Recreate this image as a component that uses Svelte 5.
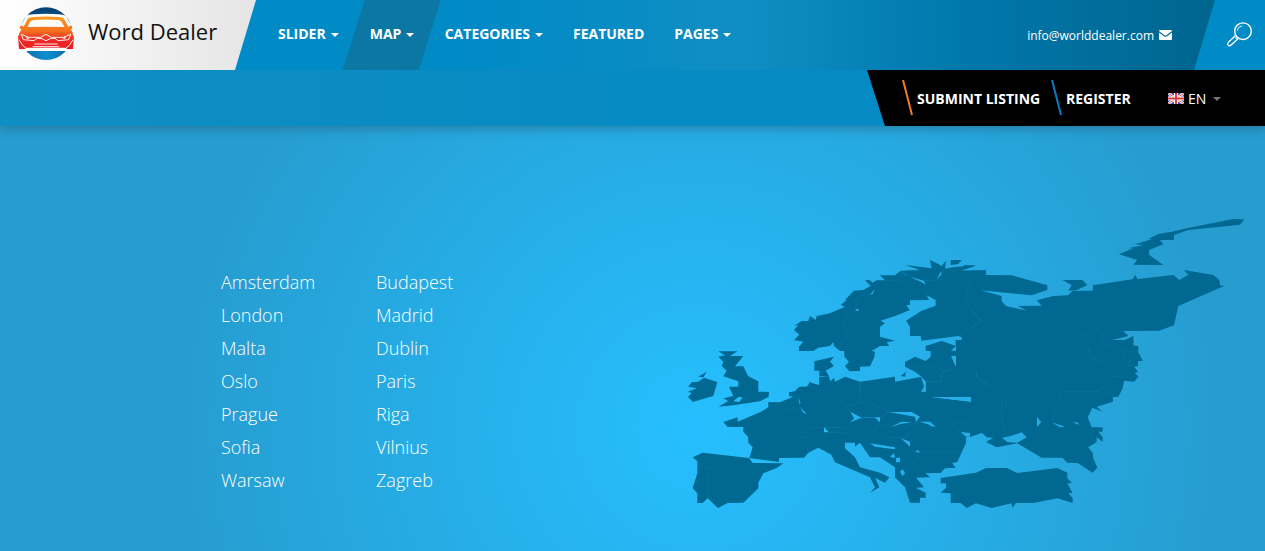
<script>
  const menu = [
    { label: 'SLIDER', caret: true },
    { label: 'MAP', caret: true, active: true },
    { label: 'CATEGORIES', caret: true },
    { label: 'FEATURED', caret: false },
    { label: 'PAGES', caret: true }
  ];
  const cities = [
    ['Amsterdam', 'London', 'Malta', 'Oslo', 'Prague', 'Sofia', 'Warsaw'],
    ['Budapest', 'Madrid', 'Dublin', 'Paris', 'Riga', 'Vilnius', 'Zagreb']
  ];
  // Each region is drawn on its own grid of third-pixels.
  const regions = [
    {
      at: 'translate(0 130) scale(.33333)',
      land: 'M25 170L35 157 55 155 72 143 112 156 100 198 38 216 24 200 35 190 24 185 50 175ZM55 140L80 125 70 142ZM115 64L172 64 150 78 190 78 165 109 190 109 204 138 235 154 235 185 267 186 266 200 240 214 160 226 115 230 145 213 130 205 160 198 147 170 175 170 175 154 130 139 140 122 125 108 130 95 115 80 135 76ZM403 94L462 80 450 95 462 108 437 122 447 138 418 138 418 122 403 122ZM130 276L173 262 173 275 240 247 265 232 265 216 300 217 340 200 327 198 327 187 345 184 357 171 385 170 388 155 418 168 418 140 445 140 452 155 452 374 450 372 415 353 385 368 372 383 297 384 297 396 208 384 218 352 205 338 204 320 190 305 190 291 143 291ZM38 382L68 368 207 384 218 399 310 400 290 414 250 430 235 458 235 475 190 518 143 519 114 534 83 505 68 519 52 519 52 490 38 474 52 430 52 394Z',
      water: 'M160 214L175 201 188 202 178 216ZM354 202L362 218 359 222ZM360 232L380 252 370 248ZM432 292L446 306 432 306Z',
      border: 'M83 505V425L100 412H66V400L56 414M268 217L300 222 320 246 340 232 368 246M340 202L380 252M480 292H385L358 322 380 322 372 336 386 364M415 306L432 320 440 308H480'
    },
    {
      at: 'translate(100 50) scale(.33333)',
      land: 'M42 270L58 254 42 240 55 225 42 228 65 213 85 213 90 198 107 210 110 198 150 190 195 170 182 165 200 150 195 150 222 122 250 120 272 108 255 91 268 90 278 98 290 91 315 91 300 76 345 76 362 62 435 103 440 136 447 150 390 151 390 165 378 166 390 180 345 198 302 212 315 220 300 230 300 260 345 272 320 277 328 288 300 288 275 303 285 305 283 322 270 349 240 350 240 363 208 364 195 348 207 335 193 320 193 303 180 303 162 288 160 276 150 288 115 293 100 303 57 303 57 290 70 275ZM362 62L420 60 375 45 455 55 450 30 475 42 485 48 498 32 495 56 520 52 587 45 545 62 590 62 590 272 572 272 535 258 424 272 422 258 390 258 390 230 378 212 425 182 467 167 467 150 440 136 430 103ZM512 30L545 30 535 42 512 45ZM375 336L405 320 437 333 452 320 452 303 437 302 437 288 485 273 528 288 528 276 572 272 630 262 630 430 437 430 437 395 425 380 405 365 375 350ZM362 378L378 365 375 380ZM48 420L60 410 80 410 90 398 118 405 118 382 147 378 150 395 162 383 165 395 195 380 240 395 345 380 345 395 425 380 435 400 430 430 48 430Z',
      water: 'M360 64L390 80 432 92 437 104 425 97 372 72ZM225 182L232 175 238 182ZM270 134L284 117 278 132ZM513 318L528 318 528 350ZM528 288L513 302 528 302ZM470 88L484 62 484 74Z',
      border: 'M270 134H240L225 178 195 195 193 225 208 258 180 275V290M362 62V91H315M400 92H470L484 62H545M437 104V136M545 92L570 105 555 150 604 212 535 258M378 349H470L495 365 528 350M495 365L482 380V395H437M240 395V420M590 365V380L620 410'
    },
    {
      at: 'translate(140 170) scale(.33333)',
      land: 'M0 40H300L317 68 510 40V203L485 188 450 200 448 188 422 188 438 203 438 218 410 275 395 277 405 292 375 293 362 308 317 310 330 322 288 323 312 352 287 353 317 368 317 383 300 383 300 398 270 398 255 352 225 322 225 292 180 262 150 262 120 218 105 230 105 218 75 218 75 235 105 262 120 292 180 308 208 322 195 338 165 323 178 352 150 368 165 352 150 322 45 277 30 247 0 235Z',
      water: 'M150 220L225 232 225 238 165 230ZM222 250L225 265 210 260ZM228 265L240 262 240 277 228 277ZM240 305L248 298 255 310 248 318ZM243 205L270 215 270 230ZM285 245L295 240 300 248ZM212 170L245 155 275 157 245 161ZM298 155L330 155 348 170ZM205 126L275 126 300 140 288 156 285 140ZM90 125L125 143 180 142 180 157 165 143 120 145 90 157 103 145ZM12 172L25 185 12 187ZM338 82L453 82 453 95ZM303 20L317 35 317 65 303 65 312 50Z',
      border: 'M120 35V80L135 95 75 110 100 130M135 95L210 125 180 145 165 185 135 218M180 142L205 126M0 172H85L90 155M12 187H78M165 160L210 170 255 170 298 155 260 203H190M300 247H423M270 230L300 262 255 293M385 157H440M390 162L430 190M362 35L370 5 390 0M470 0V20L510 50M303 35H362'
    },
    {
      at: 'translate(290 0) scale(.33333)',
      land: 'M447 163L490 145 475 145 520 135 495 133 545 118 535 117 565 102 605 95 650 85 790 57 823 58 810 74 655 90 612 105 612 120 570 120 580 133 537 150 538 165 580 195 490 194 502 180ZM-25 212L48 210 48 225 125 226 232 256 232 270 185 286 32 271 95 288 95 303 108 318 170 332 143 318 215 317 200 301 250 288 295 286 308 272 368 272 369 256 488 238 495 225 503 237 610 225 628 240 655 225 642 210 730 225 748 240 750 256 762 258 625 318 612 376 567 392 460 393 475 408 415 423 460 422 490 408 490 437 505 438 505 455 -25 455ZM277 240L337 240 352 256 320 270 295 272 305 255ZM-20 195L18 197 -10 206Z',
      water: '',
      border: 'M0 330L34 364 0 385M338 408L370 398 383 390 400 410 388 424 410 432 430 438M338 408L350 425 345 440 368 450'
    },
    {
      at: 'translate(250 140) scale(.33333)',
      land: 'M0 100L77 100V0L610 0 610 17 624 18 624 35 639 62 624 64 624 78 612 80 624 95 615 98 625 110 612 125 582 122 578 145 565 170 548 172 549 185 500 200 518 215 487 203 473 232 485 262 518 262 518 275 505 275 518 292 518 306 500 292 500 306 475 322 488 338 490 355 502 383 488 398 443 369 412 368 397 353 335 353 262 310 200 322 168 306 190 293 170 292 155 278 120 291 108 292 108 308 82 366 65 370 77 383 45 385 32 398 0 398ZM32 414L138 398 168 384 230 384 262 399 382 384 412 398 412 415 426 429 412 430 428 460 415 458 428 475 428 489 382 475 310 489 258 489 247 504 245 490 185 504 138 490 110 504 92 489 62 489 62 460 32 458 48 443 48 430 32 430Z',
      water: 'M3 171L123 171 123 185ZM216 293L240 289 275 277 290 292 262 308 232 306ZM321 230L334 247 321 262ZM365 247L405 260 390 262ZM428 248L440 246 450 254ZM0 250L15 260 0 258ZM65 48L77 48 77 78ZM92 276L120 279 120 290 108 290Z',
      border: 'M140 92V108L183 140M190 155L215 178 217 260 226 285M230 185V200M275 200L293 218M260 270L300 235M350 185L382 215 365 235 372 252 405 262M382 178L398 154H502L550 110H582M502 154L565 170M580 50V35H624M580 50L600 62 595 78 624 70M475 20L478 50 510 62 475 58M480 262L495 280 480 290 500 306'
    }
  ];
</script>

<header>
  <div class="top">
    <a class="brand" href="#home">
      <svg class="logo" viewBox="51 18 174 165" aria-hidden="true">
        <defs>
          <radialGradient id="globe" cx=".5" cy=".9" r=".9">
            <stop offset="0" stop-color="#1090d2" />
            <stop offset=".5" stop-color="#0a67a3" />
            <stop offset="1" stop-color="#073f70" />
          </radialGradient>
          <linearGradient id="car" x1="0" y1="0" x2="0" y2="1">
            <stop offset="0" stop-color="#fc9c22" />
            <stop offset=".45" stop-color="#f4701f" />
            <stop offset=".7" stop-color="#ee2a22" />
            <stop offset="1" stop-color="#ed1c24" />
          </linearGradient>
        </defs>
        <circle cx="138" cy="101" r="79" fill="url(#globe)" />
        <path fill="#fcfcfc" d="M50 74L66 70 78 48Q83 44 100 43Q138 40 176 43Q193 44 198 49L210 70 226 76V153H50Z" />
        <path fill="url(#car)" d="M71 80L84 55Q88 52 100 51Q138 48 176 51Q188 52 192 56L205 80 213 76Q218 79 217 84L213 89Q219 96 219 104L222 110 219 147H202L196 143H80L74 147H57L54 110 57 104Q58 96 64 89L59 84Q59 79 64 76Z" />
        <path fill="#fcfcfc" d="M82 81L92 63Q94 61 102 60Q138 57 174 60Q181 61 183 63L194 81Q138 79 82 81Z" />
        <g fill="none" stroke="#fff" stroke-width="2.8" stroke-linejoin="round">
          <path d="M64 103L86 112H122L138 103 154 112H190L212 103 206 119 174 122 165 115H153L138 122 123 115H111L102 122 70 119Z" />
          <path d="M103 132H173M98 140H178M57 119L68 136 78 144M219 119L208 136 198 144" />
        </g>
        <path d="M78 111L91 114 81 117ZM198 111L185 114 195 117Z" fill="#fff" />
      </svg>
      <span>Word Dealer</span>
    </a>
    <nav>
      {#each menu as item}
        <a href="#{item.label.toLowerCase()}" class:active={item.active}>
          {item.label}{#if item.caret}<i class="caret"></i>{/if}
        </a>
      {/each}
    </nav>
    <a class="mail" href="#contact">
      info@worlddealer.com
      <svg width="13" height="10" viewBox="0 0 13 10" aria-hidden="true">
        <path fill="#fff" d="M0 1Q0 0 1 0H12Q13 0 13 1L7.4 5.2Q6.5 5.8 5.6 5.2L0 1ZM0 2.5L5 6.3Q6.5 7.3 8 6.3L13 2.5V9Q13 10 12 10H1Q0 10 0 9Z" />
      </svg>
    </a>
    <a class="search" href="#search" aria-label="Search">
      <svg width="26" height="26" viewBox="0 0 26 26" fill="none" stroke="#fff" aria-hidden="true">
        <circle cx="16" cy="9.2" r="8.3" stroke-width="1.4" />
        <path d="M10.2 8.7A5.8 5.8 0 0 1 15.2 3.8" stroke-width=".9" />
        <path d="M8.6 13.5L1.4 20.3Q.1 21.9 1.3 23.2Q2.7 24.4 4.1 23.1L11.3 16.4M9.8 15.2L8.6 16.5" stroke-width="1.3" />
      </svg>
    </a>
  </div>
  <div class="sub">
    <div class="account">
      <a class="submit" href="#submit">
        <svg width="12" height="36" viewBox="0 0 12 36" aria-hidden="true"><path d="M2 0L11 35" stroke="#f47b20" stroke-width="2" /></svg>
        SUBMINT LISTING
      </a>
      <a class="register" href="#register">
        <svg width="12" height="36" viewBox="0 0 12 36" aria-hidden="true"><path d="M2 0L11 35" stroke="#0a7cbf" stroke-width="2" /></svg>
        REGISTER
      </a>
      <a class="lang" href="#lang">
        <svg width="16" height="11" viewBox="0 0 16 11" aria-hidden="true">
          <rect width="16" height="11" fill="#3a50a8" />
          <path d="M0 0L16 11M16 0L0 11" stroke="#fff" stroke-width="2.6" />
          <path d="M0 0L16 11M16 0L0 11" stroke="#e2484c" stroke-width="1" />
          <path d="M8 0V11M0 5.5H16" stroke="#fff" stroke-width="4" />
          <path d="M8 0V11M0 5.5H16" stroke="#e23a3e" stroke-width="2" />
        </svg>
        EN<i class="caret"></i>
      </a>
    </div>
  </div>
</header>

<main>
  <div class="cities">
    {#each cities as column}
      <ul>
        {#each column as city}<li><a href="#{city.toLowerCase()}">{city}</a></li>{/each}
      </ul>
    {/each}
  </div>
  <svg class="map" viewBox="0 0 570 320" aria-label="Map of Europe">
    <mask id="coast" maskUnits="userSpaceOnUse" x="0" y="0" width="570" height="320">
      {#each regions as r}<path transform={r.at} d={r.land} fill="#fff" />{/each}
      {#each regions as r}<path transform={r.at} d={r.water} fill="#000" />{/each}
    </mask>
    <g mask="url(#coast)">
      <rect width="570" height="320" fill="#006891" />
      {#each regions as r}
        <path transform={r.at} d={r.border} fill="none" stroke="#0f759c" stroke-width="1.8" />
      {/each}
    </g>
  </svg>
</main>

<style>
  :global(body) {
    margin: 0;
    overflow: hidden;
    background: #259bcf;
    font-family: 'Open Sans', sans-serif;
  }
  a {
    color: #fff;
    text-decoration: none;
  }
  header {
    position: relative;
    box-shadow: 0 2px 10px rgba(40, 70, 90, 0.45);
  }
  .top {
    display: flex;
    height: 70px;
    background: linear-gradient(90deg, #008ac6 0, #008ac6 470px, #0f8ec3 745px, #0078ac 960px, #006690 1200px);
  }
  .brand {
    display: flex;
    box-sizing: border-box;
    width: 256px;
    padding: 6px 0 0 17px;
    color: #111;
    font-size: 22px;
    line-height: 51px;
    background: linear-gradient(90deg, #fff, #e5e5e5);
    clip-path: polygon(0 0, 100% 0, 235px 100%, 0 100%);
  }
  .logo {
    width: 58px;
    height: 55px;
    margin-right: 13px;
  }
  nav {
    display: flex;
    height: 70px;
  }
  nav a {
    box-sizing: border-box;
    padding: 0 26px 0 4px;
    font-size: 14px;
    font-weight: 700;
    line-height: 68px;
    white-space: nowrap;
  }
  nav a:first-child {
    padding-left: 22px;
  }
  nav a.active {
    width: 98px;
    margin-left: -22px;
    padding: 0 0 0 27px;
    background: #0c77a3;
    clip-path: polygon(22px 0, 100% 0, 76px 100%, 0 100%);
  }
  .caret {
    display: inline-block;
    margin-left: 5px;
    border: 4px solid transparent;
    border-top-color: currentColor;
    border-bottom: 0;
    vertical-align: 2px;
  }
  .mail {
    display: flex;
    align-items: center;
    gap: 5px;
    margin-left: auto;
    margin-right: 22px;
    font-size: 12px;
  }
  .search {
    box-sizing: border-box;
    width: 71px;
    padding: 22px 0 0 33px;
    background: #008ac6;
    clip-path: polygon(21px 0, 100% 0, 100% 100%, 0 100%);
  }
  .sub {
    display: flex;
    justify-content: flex-end;
    height: 56px;
    background: linear-gradient(90deg, #0f8ec2, #058ac3 60%);
  }
  .account {
    display: flex;
    box-sizing: border-box;
    width: 398px;
    padding-left: 34px;
    background: #000;
    clip-path: polygon(0 0, 100% 0, 100% 100%, 18px 100%);
  }
  .account a {
    display: flex;
    align-items: center;
    font-size: 14px;
    font-weight: 700;
    white-space: nowrap;
  }
  .account .submit {
    width: 149px;
    gap: 4px;
  }
  .account .register {
    width: 118px;
    gap: 4px;
  }
  .account .lang {
    font-weight: 400;
  }
  .lang svg {
    margin-right: 4px;
  }
  .lang .caret {
    color: #777;
    margin: 2px 0 0 7px;
  }
  main {
    display: flex;
    height: 425px;
    background: radial-gradient(circle at 700px 302px, #26bfff 0, #269ccf 530px);
  }
  .cities {
    display: flex;
    padding: 140px 0 0 221px;
  }
  ul {
    width: 155px;
    margin: 0;
    padding: 0;
    list-style: none;
  }
  li {
    height: 33px;
    font-size: 18px;
    font-weight: 300;
    line-height: 33px;
  }
  .map {
    width: 570px;
    height: 320px;
    margin: 74px 0 0 149px;
  }
</style>
